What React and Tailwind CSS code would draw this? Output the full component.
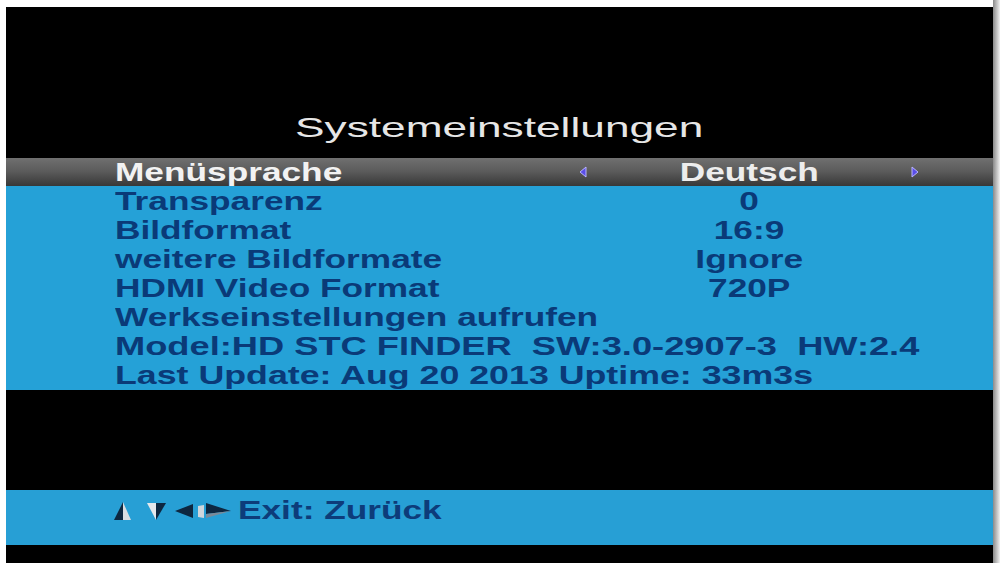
import React from "react";

const rows = [
  { label: "Transparenz", value: "0" },
  { label: "Bildformat", value: "16:9" },
  { label: "weitere Bildformate", value: "Ignore" },
  { label: "HDMI Video Format", value: "720P" },
  { label: "Werkseinstellungen aufrufen" },
  {
    label: "Model:HD STC FINDER\u00a0\u00a0SW:3.0-2907-3\u00a0\u00a0HW:2.4",
    scale: "scale-x-[1.45]",
  },
  { label: "Last Update: Aug 20 2013 Uptime: 33m3s", scale: "scale-x-[1.43]" },
];

const font = { fontFamily: '"Liberation Sans", Arial, sans-serif' };

const Arrow = ({ dir }) => (
  <svg width="10" height="12" viewBox="0 0 10 12">
    {dir === "left" ? (
      <polygon points="8,1 2,6 8,11" fill="#5a4ee8" stroke="#b9b4ff" strokeWidth="1" />
    ) : (
      <polygon points="2,1 8,6 2,11" fill="#5a4ee8" stroke="#b9b4ff" strokeWidth="1" />
    )}
  </svg>
);

const NavIcons = () => (
  <svg width="122" height="22" viewBox="0 0 122 22">
    {/* up */}
    <polygon points="10,2 1,20 10,20" fill="#0d2740" />
    <polygon points="10,2 18,20 10,20" fill="#d8dde2" />
    {/* down */}
    <polygon points="34,3 43,3 43,20" fill="#e4e8ec" />
    <polygon points="43,3 53,3 43,20" fill="#0d2740" />
    {/* left */}
    <polygon points="80,4 62,11 80,18" fill="#0d2740" />
    {/* small light */}
    <polygon points="85,6 91,5 91,18 85,17" fill="#cfd6dc" />
    {/* right */}
    <polygon points="93,3 118,11 93,14" fill="#0d2740" />
    <polygon points="93,14 118,11 93,18" fill="#7a8a99" />
  </svg>
);

const Text = ({
  children,
  className = "",
  origin = "origin-left",
  scale = "scale-x-[1.41]",
}) => (
  <span
    className={`inline-block whitespace-nowrap font-bold text-[25px] leading-[29px] ${scale} ${origin} ${className}`}
    style={font}
  >
    {children}
  </span>
);

export default function App() {
  return (
    <div className="w-[1000px] h-[567px] bg-white flex overflow-hidden">
      <div className="pl-[6px] pt-[7px]">
        <div className="w-[987px] h-[556px] bg-black flex flex-col">
          {/* Title */}
          <div className="h-[151px] flex items-end justify-center pb-[14px]">
            <span
              className="inline-block whitespace-nowrap text-[28px] leading-[32px] text-[#e6e6e6] scale-x-[1.58] origin-center"
              style={font}
            >
              Systemeinstellungen
            </span>
          </div>

          {/* Highlighted row */}
          <div className="h-[28px] flex items-center bg-gradient-to-b from-[#707070] via-[#5a5a5a] to-[#383838]">
            <div className="w-[572px] pl-[109px]">
              <Text className="text-[#f2f2f2]">Menüsprache</Text>
            </div>
            <Arrow dir="left" />
            <div className="w-[322px] text-center">
              <Text className="text-[#ededed]" origin="origin-center">
                Deutsch
              </Text>
            </div>
            <Arrow dir="right" />
          </div>

          {/* Settings list */}
          <div className="h-[204px] bg-[#25a1d7] flex flex-col pt-[1px]">
            {rows.map((row, index) => (
              <div key={index} className="h-[29px] flex items-center">
                <div className="w-[582px] pl-[109px]">
                  <Text className="text-[#0a3a78]" scale={row.scale}>
                    {row.label}
                  </Text>
                </div>
                {row.value && (
                  <div className="w-[322px] text-center">
                    <Text className="text-[#0a3a78]" origin="origin-center">
                      {row.value}
                    </Text>
                  </div>
                )}
              </div>
            ))}
          </div>

          <div className="h-[100px]" />

          {/* Footer */}
          <div className="h-[55px] bg-[#279fd5] flex items-center pl-[107px] pb-[14px] gap-[3px]">
            <NavIcons />
            <Text className="text-[#0d3c7a]">Exit: Zurück</Text>
          </div>
        </div>
      </div>
      <div className="w-[7px] h-[563px] bg-gradient-to-r from-[#8a8a8a] to-[#f2f2f2]" />
    </div>
  );
}
